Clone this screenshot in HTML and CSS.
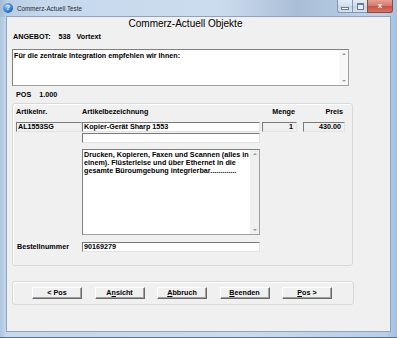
FILE: index.html
```html
<!DOCTYPE html>
<html>
<head>
<meta charset="utf-8">
<title>Commerz-Actuell Teste</title>
<link rel="stylesheet" href="styles.css">
</head>
<body>
<div class="win">
	<div class="titlebar">
		<span class="appicon">?</span>
		<span class="wintitle">Commerz-Actuell Teste</span>
		<div class="caption">
			<span class="cbtn cmin"><i></i></span>
			<span class="cbtn cmax"><i></i></span>
			<span class="cbtn cclose">x</span>
		</div>
	</div>
	<div class="client">
		<div class="content">
			<div class="heading">Commerz-Actuell Objekte</div>
			<div class="angebot">
				<span>ANGEBOT:</span><span class="nr">538</span><span class="vt">Vortext</span>
			</div>
			<div class="memo memoTop">
				<div class="memoText">Für die zentrale Integration empfehlen wir Ihnen:</div>
				<div class="vscroll"><span class="up"></span><span class="down"></span></div>
			</div>
			<div class="pos"><span>POS</span><span class="posnr">1.000</span></div>

			<!-- artikel -->
			<div class="group">
				<div class="row lbls">
					<span class="c1">Artikelnr.</span>
					<span class="c2">Artikelbezeichnung</span>
					<span class="c3 right">Menge</span>
					<span class="c4 right">Preis</span>
				</div>
				<div class="row r1">
					<span class="fld ro c1">AL1553SG</span>
					<span class="fld c2">Kopier-Gerät Sharp 1553</span>
					<span class="fld ro c3 right">1</span>
					<span class="fld ro c4 right">430.00</span>
				</div>
				<div class="row r2">
					<span class="fld c2"></span>
				</div>
				<div class="row r3">
					<div class="memo memoDesc c2">
						<div class="memoText">Drucken, Kopieren, Faxen und Scannen (alles in einem). Flüsterleise und über Ethernet in die gesamte Büroumgebung integrierbar.............</div>
						<div class="vscroll"><span class="up"></span><span class="down"></span></div>
					</div>
				</div>
				<div class="row r4">
					<span class="c1 lbl">Bestellnummer</span>
					<span class="fld c2">90169279</span>
				</div>
			</div>

			<!-- buttons -->
			<div class="btngroup">
				<span class="btn">&lt; Pos</span>
				<span class="btn">A<u>n</u>sicht</span>
				<span class="btn"><u>A</u>bbruch</span>
				<span class="btn"><u>B</u>eenden</span>
				<span class="btn"><u>P</u>os &gt;</span>
			</div>
		</div>
	</div>
</div>
</body>
</html>
```

FILE: styles.css
```css
body{
	margin:0;
	font-family:"Liberation Sans", Arial, sans-serif;
}
.win{
	width:397px;
	height:338px;
	box-sizing:border-box;
	display:flex;
	flex-direction:column;
	background:linear-gradient(90deg,#aec5df 0px,#c6d8ec 7px,#cbdcee 60%,#b7cfe9 97%,#a3c0e2 100%);
	border-bottom:1px solid #5d718b;
}
.titlebar{
	height:17px;
	display:flex;
	align-items:flex-start;
	background:linear-gradient(90deg,rgba(110,130,160,0.15) 0,rgba(255,255,255,0) 12%,rgba(255,255,255,0) 55%,rgba(110,130,165,0.3) 75%,rgba(130,150,180,0.2) 85%,rgba(255,255,255,0) 90%);
}
.appicon{
	width:10px;
	height:10px;
	margin:3px 0 0 3px;
	border-radius:50%;
	background:radial-gradient(circle at 35% 30%,#8fc3f2,#1f6fc6 70%,#1a4f92);
	color:#fff;
	font:bold 7px/10px "Liberation Sans", Arial, sans-serif;
	text-align:center;
}
.wintitle{
	margin:5px 0 0 4px;
	font-size:6.3px;
	line-height:7px;
	color:#1e2a38;
}
.caption{
	margin-left:auto;
	margin-right:4px;
	display:flex;
}
.cbtn{
	height:13px;
	box-sizing:border-box;
	display:flex;
	align-items:center;
	justify-content:center;
	border:1px solid #8596ad;
	border-top:0;
}
.cmin,.cmax{
	width:15px;
	background:linear-gradient(#e3ebf4,#d3dfec 50%,#c6d4e4 51%,#d6e1ee);
	border-right:0;
}
.cmin{
	border-radius:0 0 0 3px;
}
.cmin i{
	width:6px;
	height:1px;
	margin-top:4px;
	background:#fff;
	border:1px solid #6a7b92;
}
.cmax i{
	width:5px;
	height:4px;
	border:1px solid #6a7b92;
	border-top-width:2px;
	background:#e8eef6;
}
.cclose{
	width:26px;
	border-radius:0 0 3px 0;
	border-color:#8a4a44;
	background:linear-gradient(#e3a196,#d7766a 50%,#c9503f 51%,#d87462);
	color:#fff;
	font:bold 8px/8px "Liberation Sans", Arial, sans-serif;
}
.client{
	flex:1;
	margin:0 7px 6px 7px;
	background:#f0f0f0;
	box-shadow:0 0 0 1px #8fa3bb;
}
.content{
	width:347px;
	margin-left:5px;
	font:bold 7.2px/9px "Liberation Sans", Arial, sans-serif;
	color:#000;
}
.heading{
	margin-top:1px;
	font:normal 10px/12px "Liberation Sans", Arial, sans-serif;
	text-align:center;
}
.angebot{
	margin-top:2px;
	padding-left:1px;
	height:9px;
}
.angebot .nr{
	margin-left:8px;
}
.angebot .vt{
	margin-left:6px;
}
.memo{
	display:flex;
	box-sizing:border-box;
	background:#fff;
	border:1px solid #a0a0a0;
	border-top-color:#7f7f7f;
	border-left-color:#7f7f7f;
}
.memoTop{
	margin-top:8px;
	width:337px;
	height:37px;
}
.memoText{
	flex:1;
	padding:1px 1px 0 1px;
	line-height:8px;
}
.memoTop .memoText{
	line-height:9px;
}
.vscroll{
	width:9px;
	display:flex;
	flex-direction:column;
	justify-content:space-between;
	align-items:center;
	padding:3px 0;
	background:#f7f7f7;
}
.memoDesc .vscroll{
	background:#efefef;
}
.up{
	border:2px solid transparent;
	border-top:0;
	border-bottom:2px solid #9a9a9a;
}
.down{
	border:2px solid transparent;
	border-bottom:0;
	border-top:2px solid #9a9a9a;
}
.pos{
	margin-top:4px;
	padding-left:4px;
	height:9px;
}
.posnr{
	margin-left:8px;
}
.group{
	margin-top:4px;
	width:341px;
	height:163px;
	box-sizing:border-box;
	padding:3px 0 0 3px;
	border:1px solid #d5d9de;
	border-radius:3px;
	box-shadow:inset 1px 1px 0 #fff;
}
.row{
	display:grid;
	grid-template-columns:66px 180px 41px 42px;
	height:10px;
	line-height:10px;
}
.c1{grid-column:1;}
.c2{grid-column:2;width:178px;}
.c3{grid-column:3;width:35px;}
.c4{grid-column:4;width:42px;}
.right{
	text-align:right;
}
.lbls .right{
	padding-right:2px;
	box-sizing:border-box;
}
.r1{margin-top:5px;}
.r2{margin-top:1px;}
.r3{
	margin-top:6px;
	height:86px;
}
.r4{margin-top:7px;}
.lbl{
	padding-left:1px;
}
.fld{
	box-sizing:border-box;
	height:10px;
	line-height:8px;
	padding:0 1px;
	background:#fff;
	border:1px solid #e3e3e3;
	border-top-color:#7a7a7a;
	border-left-color:#7a7a7a;
	white-space:nowrap;
	overflow:hidden;
}
.fld.ro{
	background:#f0f0f0;
}
.fld.right{
	padding-right:3px;
}
.memoDesc{
	height:86px;
}
.btngroup{
	margin-top:15px;
	width:342px;
	height:24px;
	box-sizing:border-box;
	padding:5px 0 0 19px;
	display:flex;
	align-items:flex-start;
	gap:12.5px;
	border:1px solid #d5d9de;
	border-radius:3px;
	box-shadow:inset 1px 1px 0 #fff;
}
.btn{
	width:50px;
	height:12px;
	box-sizing:border-box;
	text-align:center;
	line-height:10px;
	background:#f0f0f0;
	border:1px solid #fff;
	border-right-color:#696969;
	border-bottom-color:#696969;
	box-shadow:inset -1px -1px 0 #a0a0a0;
}
.btn u{
	text-decoration-thickness:1px;
	text-underline-offset:1px;
}
```
